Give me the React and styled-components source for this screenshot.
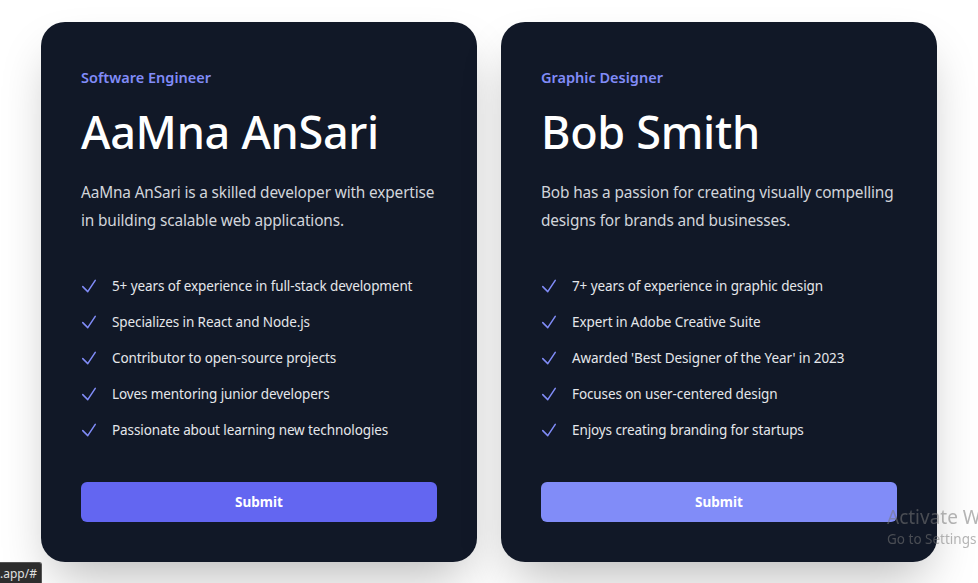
import React from "react";
import styled, { createGlobalStyle } from "styled-components";

const Global = createGlobalStyle`
  html, body { margin: 0; padding: 0; background: #ffffff; }
  body { font-family: "Noto Sans", "Open Sans", sans-serif; overflow: hidden; }
  * { box-sizing: border-box; }
`;

const Page = styled.main`
  width: 978px;
  height: 583px;
  display: flex;
  justify-content: center;
  align-items: flex-start;
  gap: 24px;
  padding-top: 22px;
`;

const Card = styled.section`
  width: 436px;
  height: 540px;
  background: #111827;
  border-radius: 24px;
  padding: 40px;
  display: flex;
  flex-direction: column;
  box-shadow: 0 25px 50px -12px rgba(0, 0, 0, 0.28);
`;

const Role = styled.div`
  color: #818cf8;
  font-size: 14.5px;
  font-weight: 600;
  line-height: 30px;
`;

const Name = styled.h1`
  margin: 12px 0 0;
  color: #ffffff;
  font-size: 45px;
  font-weight: 500;
  line-height: 56px;
  letter-spacing: -0.3px;
`;

const Desc = styled.p`
  margin: 19px 0 0;
  color: #d1d5db;
  font-size: 15.4px;
  line-height: 28px;
  letter-spacing: -0.15px;
`;

const List = styled.ul`
  list-style: none;
  margin: 33px 0 0;
  padding: 0;
`;

const Item = styled.li`
  display: flex;
  align-items: center;
  gap: 13px;
  height: 36px;
  color: #e5e7eb;
  font-size: 13.5px;
  letter-spacing: -0.1px;
`;

const Check = styled.svg`
  width: 20px;
  height: 20px;
  flex: none;
  margin-left: -2px;
  color: #818cf8;
`;

const Button = styled.button`
  margin-top: 34px;
  height: 40px;
  width: 100%;
  border: none;
  border-radius: 6px;
  background: ${(p) => (p.$light ? "#818cf8" : "#6366f1")};
  color: #ffffff;
  font-family: inherit;
  font-size: 13.5px;
  font-weight: 700;
  cursor: pointer;
`;

const Watermark = styled.div`
  position: fixed;
  left: 887px;
  top: 505px;
  color: rgba(120, 120, 120, 0.55);
  white-space: nowrap;
  font-family: "Noto Sans", sans-serif;
`;

const WmTitle = styled.div`
  font-size: 19px;
  line-height: 24px;
`;

const WmSub = styled.div`
  font-size: 13.5px;
  line-height: 20px;
`;

const Status = styled.div`
  position: fixed;
  left: 0;
  bottom: 0;
  height: 21px;
  padding: 0 4px 0 0;
  background: #2d2d2d;
  color: #e0e0e0;
  font-size: 12px;
  line-height: 21px;
  border-top-right-radius: 3px;
  border: 1px solid #555;
  border-left: none;
  border-bottom: none;
`;

const people = [
  {
    role: "Software Engineer",
    name: "AaMna AnSari",
    desc: "AaMna AnSari is a skilled developer with expertise in building scalable web applications.",
    points: [
      "5+ years of experience in full-stack development",
      "Specializes in React and Node.js",
      "Contributor to open-source projects",
      "Loves mentoring junior developers",
      "Passionate about learning new technologies",
    ],
  },
  {
    role: "Graphic Designer",
    name: "Bob Smith",
    desc: "Bob has a passion for creating visually compelling designs for brands and businesses.",
    points: [
      "7+ years of experience in graphic design",
      "Expert in Adobe Creative Suite",
      "Awarded 'Best Designer of the Year' in 2023",
      "Focuses on user-centered design",
      "Enjoys creating branding for startups",
    ],
    light: true,
  },
];

function CheckIcon() {
  return (
    <Check viewBox="0 0 24 24" fill="none" stroke="currentColor" strokeWidth="1.8" strokeLinecap="round" strokeLinejoin="round">
      <path d="M4.5 12.75l6 6 9-13.5" />
    </Check>
  );
}

export default function App() {
  return (
    <>
      <Global />
      <Page>
        {people.map((p) => (
          <Card key={p.name}>
            <Role>{p.role}</Role>
            <Name>{p.name}</Name>
            <Desc>{p.desc}</Desc>
            <List>
              {p.points.map((pt) => (
                <Item key={pt}>
                  <CheckIcon />
                  {pt}
                </Item>
              ))}
            </List>
            <Button $light={p.light}>Submit</Button>
          </Card>
        ))}
      </Page>
      <Watermark>
        <WmTitle>Activate Windows</WmTitle>
        <WmSub>Go to Settings to activate Windows.</WmSub>
      </Watermark>
      <Status>.app/#</Status>
    </>
  );
}
